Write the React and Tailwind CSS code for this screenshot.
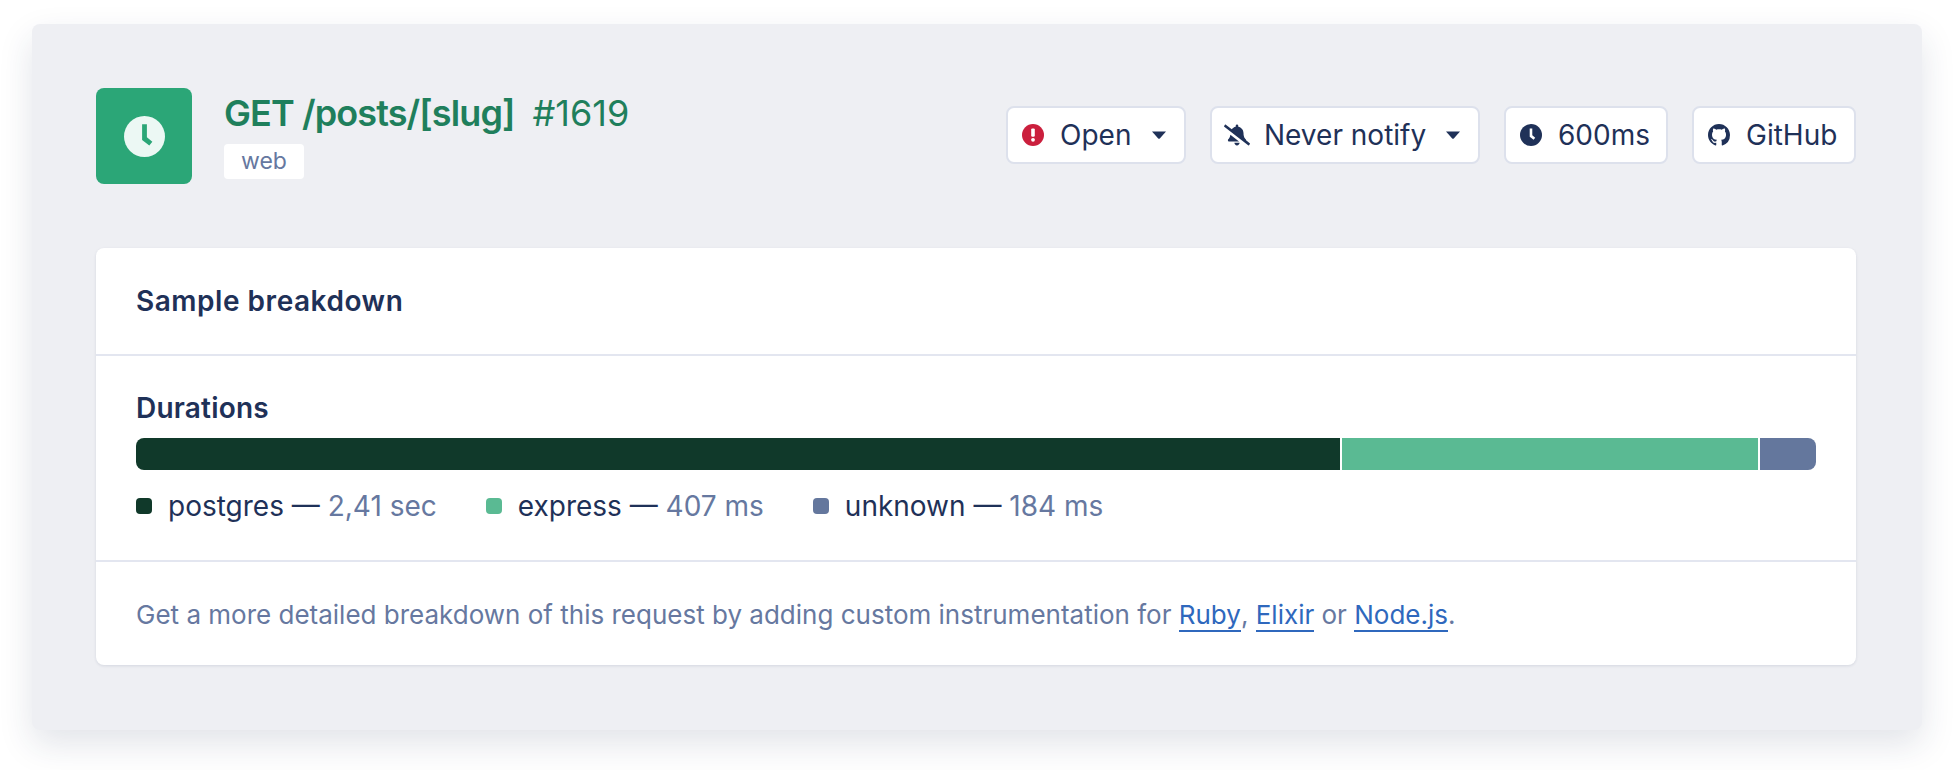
import { FaBellSlash } from 'react-icons/fa';

const font = { fontFamily: 'Inter, sans-serif' };

const ClockIcon = ({ className, hand }) => (
  <svg viewBox="0 0 24 24" className={className}>
    <circle cx="12" cy="12" r="12" fill="currentColor" />
    <path d="M10.6 4.8h2.8v7.6l3.2 2.6-1.8 2.3-4.2-3.3z" fill={hand} />
  </svg>
);

const AlertIcon = () => (
  <svg viewBox="0 0 22 22" className="w-[22px] h-[22px] ml-[2px]">
    <circle cx="11" cy="11" r="11" fill="#cb1f3d" />
    <rect x="9.2" y="4.4" width="3.6" height="8.4" rx="1.2" fill="#fff" />
    <circle cx="11" cy="15.8" r="1.9" fill="#fff" />
  </svg>
);

const GithubIcon = () => (
  <svg viewBox="0 0 16 16" className="w-[22px] h-[22px] ml-[2px]" fill="currentColor">
    <path d="M8 0C3.58 0 0 3.58 0 8c0 3.54 2.29 6.53 5.47 7.59.4.07.55-.17.55-.38 0-.19-.01-.82-.01-1.49-2.01.37-2.53-.49-2.69-.94-.09-.23-.48-.94-.82-1.13-.28-.15-.68-.52-.01-.53.63-.01 1.08.58 1.23.82.72 1.21 1.87.87 2.33.66.07-.52.28-.87.51-1.07-1.78-.2-3.64-.89-3.64-3.95 0-.87.31-1.59.82-2.15-.08-.2-.36-1.02.08-2.12 0 0 .67-.21 2.2.82.64-.18 1.32-.27 2-.27.68 0 1.36.09 2 .27 1.53-1.04 2.2-.82 2.2-.82.44 1.1.16 1.92.08 2.12.51.56.82 1.27.82 2.15 0 3.07-1.87 3.75-3.65 3.95.29.25.54.73.54 1.48 0 1.07-.01 1.93-.01 2.2 0 .21.15.46.55.38A8.013 8.013 0 0016 8c0-4.42-3.58-8-8-8z" />
  </svg>
);

const Caret = () => (
  <svg viewBox="0 0 14 8" className="w-[14px] h-[8px] ml-auto mr-[18px]" fill="currentColor">
    <path d="M0 .5h14L8 7.2a1.4 1.4 0 0 1-2 0z" />
  </svg>
);

const ActionButton = ({ icon, label, caret, className }) => (
  <div className={`flex items-center h-[58px] bg-white rounded-lg border-2 border-[#dde1ec] text-[#1f3158] text-[28px] ${className}`}>
    <span className="flex w-[28px] justify-center mr-[14px]">{icon}</span>
    <span>{label}</span>
    {caret && <Caret />}
  </div>
);

const LegendItem = ({ color, name, value }) => (
  <div className="flex items-center">
    <span className={`w-4 h-4 rounded mr-4 ${color}`}></span>
    <span className="text-[#1f3158]">{name} — <span className="text-[#6678a0]">{value}</span></span>
  </div>
);

const DocLink = ({ children }) => (
  <a href="#" className="inline-block text-[#2f68bd] border-b-2 border-[#2f68bd] leading-[30px]">{children}</a>
);

export default function App() {
  return (
    <div className="min-h-[770px] bg-white px-8 pt-6" style={font}>
      <div className="h-[706px] bg-[#eeeff3] rounded-lg shadow-[0_14px_34px_rgba(31,49,88,0.13)] pl-16 pr-[66px] pt-16">
        <header className="flex items-center justify-between h-24">
          <div className="flex">
            <div className="w-24 h-24 bg-[#2ba677] rounded-lg flex items-center justify-center">
              <ClockIcon className="w-[41px] h-[41px] text-[#ecf8f4]" hand="#2ba677" />
            </div>
            <div className="ml-8">
              <h1 className="text-[36px] leading-10 mt-[5px] text-[#1f7f5c]">
                <span className="font-semibold tracking-[-0.9px]">GET /posts/[slug]</span>
                <span className="ml-[18px]">#1619</span>
              </h1>
              <span className="inline-block mt-[11px] bg-white rounded text-[#6678a0] text-[23px] leading-[35px] w-20 text-center">web</span>
            </div>
          </div>
          <div className="flex gap-6 mb-[2px]">
            <ActionButton className="w-[180px] pl-[10px]" icon={<AlertIcon />} label="Open" caret />
            <ActionButton className="w-[270px] pl-[10px]" icon={<FaBellSlash className="w-[28px] h-[26px] ml-[2px]" />} label="Never notify" caret />
            <ActionButton className="w-[164px] pl-[10px]" icon={<ClockIcon className="w-[22px] h-[22px] ml-[2px]" hand="#fff" />} label="600ms" />
            <ActionButton className="w-[164px] pl-[10px]" icon={<GithubIcon />} label="GitHub" />
          </div>
        </header>

        <section className="mt-16 bg-white rounded-lg shadow-[0_1px_3px_rgba(31,49,88,0.12)]">
          <div className="h-[108px] flex items-center px-10 border-b-2 border-[#e3e6f0]">
            <h2 className="text-[28px] font-semibold tracking-[0.53px] text-[#1f3158]">Sample breakdown</h2>
          </div>
          <div className="h-[206px] px-10 pt-[36px] border-b-2 border-[#e3e6f0]">
            <h3 className="text-[28px] leading-8 font-semibold tracking-[0.2px] text-[#1f3158]">Durations</h3>
            <div className="flex gap-[2px] h-8 mt-[14px] rounded-lg overflow-hidden">
              <div className="w-[1204px] bg-[#10392a]"></div>
              <div className="w-[416px] bg-[#5aba93]"></div>
              <div className="flex-1 bg-[#64779d]"></div>
            </div>
            <div className="flex gap-[49px] mt-[20px] text-[28px] leading-8">
              <LegendItem color="bg-[#10392a]" name="postgres" value="2,41 sec" />
              <LegendItem color="bg-[#5aba93]" name="express" value="407 ms" />
              <LegendItem color="bg-[#64779d]" name="unknown" value="184 ms" />
            </div>
          </div>
          <p className="h-[103px] px-10 pt-[2px] flex items-center text-[26px] text-[#6678a0]">
            <span>Get a more detailed breakdown of this request by adding custom instrumentation for <DocLink>Ruby</DocLink>, <DocLink>Elixir</DocLink> or <DocLink>Node.js</DocLink>.</span>
          </p>
        </section>
      </div>
    </div>
  );
}
